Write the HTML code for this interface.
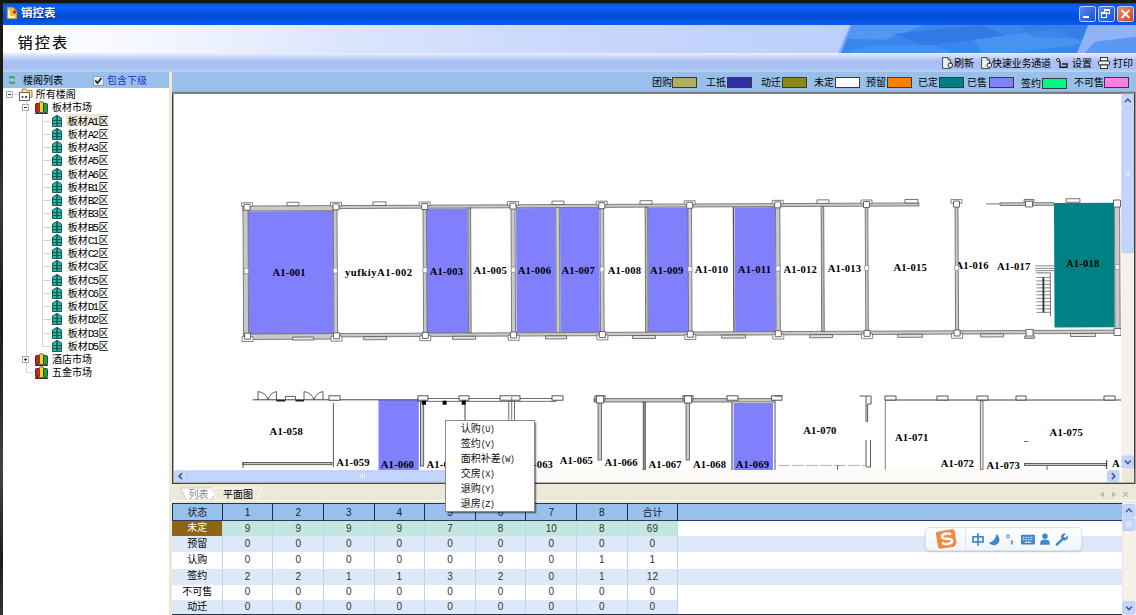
<!DOCTYPE html>
<html lang="zh-CN">
<head>
<meta charset="utf-8">
<title>销控表</title>
<style>
*{box-sizing:border-box;margin:0;padding:0}
html,body{width:1136px;height:615px;overflow:hidden;background:#15170f}
body{position:relative;font-family:"Liberation Sans","Noto Sans CJK SC","WenQuanYi Zen Hei",sans-serif;font-size:10px;color:#000}
div,span,i{position:absolute;white-space:nowrap}
#win{left:3px;top:3px;width:1133px;height:612px;background:#fff;overflow:hidden}
#title{left:0;top:0;width:1133px;height:22px;background:linear-gradient(to bottom,#0a3ab0 0%,#0a5aec 9%,#0a62f6 24%,#0353e2 45%,#004dd8 68%,#0456e8 86%,#0a5cf0 100%)}
#title .cap{left:18px;top:3px;color:#fff;font-weight:bold;font-size:11.5px;line-height:15px;text-shadow:1px 1px 0 #0a2a80}
.tb{top:2.500px;width:16.400px;height:16.200px;border:1px solid #c4d4f6;border-radius:2.500px;background:linear-gradient(135deg,#5a8cf4,#1e4cd0)}
.tb.close{background:linear-gradient(135deg,#f08c68,#d8401a);width:16.500px}
#head{left:0;top:21.500px;width:1133px;height:28.500px;background:linear-gradient(to right,#ffffff 0%,#f6f8ff 12%,#dbe5fd 30%,#c9d8fc 50%,#bccefb 75%,#b2c6fa 100%)}
#head .h{left:14.500px;top:8px;font-size:15px;line-height:20px;color:#101014;letter-spacing:2.200px;text-shadow:.3px 0 0 rgba(16,16,20,.6)}
#toolbar{left:0;top:49.800px;width:1133px;height:19.700px;background:linear-gradient(to bottom,#e9effd 0%,#dbe5fc 10%,#bccdf6 28%,#a9bff2 46%,#a9c1f2 84%,#b5cdf5 92%,#b9d2f6 100%)}
#toolbar span{top:5.200px;font-size:10px;line-height:12px}
#legend{left:0;top:69px;width:1133px;height:20px;background:#99c0eb}
#legend span{top:5px;font-size:10px;line-height:12px}
#legend i{top:5px;width:25px;height:11px;border:1px solid #3a3a3a}
#tree{left:0;top:85px;width:166px;height:527px;background:#fff}
#split{left:166px;top:69px;width:3px;height:543px;background:#ece9d8}
.tn{font-size:10px;line-height:12px}
.tn b{font-weight:normal;font-family:'Liberation Mono',monospace;font-size:11px;letter-spacing:-1.700px;margin-right:1.100px;line-height:10px}
</style>
</head>
<body>
<div style="left:0;top:0;width:3px;height:615px;background:linear-gradient(to bottom,#15170f 0,#1a1f12 90px,#20261a 150px,#3a3d40 200px,#2a2e2a 250px,#191d12 300px,#23281c 380px,#40444a 470px,#2c302c 520px,#1a1e14 560px,#33363a 615px)"></div>
<div id="win">

<div id="title">
<svg style="position:absolute;left:3px;top:3px" width="12" height="14" viewBox="0 0 12 14"><path d="M1 1h6l4 4v8H1z" fill="#e8c048" stroke="#8a6a18" stroke-width=".8"/><path d="M3 4v7h6" fill="none" stroke="#fff" stroke-width="1.4"/><circle cx="8.5" cy="6" r="1.8" fill="#d02818"/></svg>
<div class="cap">销控表</div>
<div class="tb" style="left:1076.200px"><i style="left:3px;top:9px;width:6px;height:2px;background:#fff"></i></div>
<div class="tb" style="left:1095.200px"><i style="left:5px;top:2px;width:6px;height:5px;border:1px solid #fff;border-top-width:2px"></i><i style="left:2px;top:5px;width:6px;height:6px;border:1px solid #fff;border-top-width:2px;background:#3565dc"></i></div>
<div class="tb close" style="left:1114.300px"><svg style="position:absolute;left:2px;top:2px" width="11" height="10" viewBox="0 0 11 10"><path d="M1.5 1l8 8M9.5 1l-8 8" stroke="#fff" stroke-width="1.8"/></svg></div>
</div>

<div id="head"><div class="h">销控表</div>
<svg style="position:absolute;left:830px;top:0" width="303" height="28.500" viewBox="0 0 303 29" preserveAspectRatio="none">
<polygon points="244,29 255,0 303,0 303,29" fill="#8fb3f6"/>
<polygon points="262,17 303,12 303,29 251,29" fill="#5c98f2"/>
<polygon points="8,29 19,0 255,0 244,29" fill="#3b86ee"/>
<polygon points="5,29 17,0 22,0 11,29" fill="#3b86ee" opacity=".45"/>
<polygon points="19,0 92,0 52,15 14,14" fill="#5fa2f4" opacity=".65"/>
<polygon points="60,9 150,0 172,11 92,21" fill="#2c74e4" opacity=".7"/>
<polygon points="140,15 222,4 252,19 172,29 150,29" fill="#5a9df3" opacity=".55"/>
<polygon points="185,0 255,0 250,14 200,12" fill="#2e78e6" opacity=".5"/>
<polygon points="30,22 100,20 120,29 12,29" fill="#4f96f2" opacity=".6"/>

</svg>
</div>

<div id="toolbar">
<svg style="position:absolute;left:939px;top:4.200px" width="13" height="12" viewBox="0 0 13 12"><path d="M.600 .600h5.400l2.500 2.500v8.300h-7.900z" fill="#eef2fb" stroke="#3a3a3a" stroke-width=".9"/><path d="M6 .600v2.500h2.500" fill="none" stroke="#3a3a3a" stroke-width=".8"/><circle cx="8.300" cy="8.200" r="2.300" fill="#eef2fb" stroke="#2a2a2a" stroke-width="1"/><path d="M8.300 5l2 1.300l-2 1z" fill="#2a2a2a"/></svg>
<span style="left:951px">刷新</span>
<svg style="position:absolute;left:978px;top:4.200px" width="13" height="12" viewBox="0 0 13 12"><path d="M.600 .600h5.400l2.500 2.500v8.300h-7.900z" fill="#eef2fb" stroke="#3a3a3a" stroke-width=".9"/><path d="M6 .600v2.500h2.500" fill="none" stroke="#3a3a3a" stroke-width=".8"/><circle cx="8.300" cy="8.200" r="2.300" fill="#eef2fb" stroke="#2a2a2a" stroke-width="1"/><path d="M8.300 5l2 1.300l-2 1z" fill="#2a2a2a"/></svg>
<span style="left:989px;letter-spacing:-.2px">快速业务通道</span>
<svg style="position:absolute;left:1053px;top:5.200px" width="12" height="11" viewBox="0 0 12 11"><path d="M2.500 2.500l1.500 1.500v5.300h7v-3.300h-5" fill="none" stroke="#1c1c1c" stroke-width="1.400"/><circle cx="2" cy="2" r="1.500" fill="#e8eefc" stroke="#1c1c1c" stroke-width=".9"/></svg>
<span style="left:1069px">设置</span>
<svg style="position:absolute;left:1095px;top:4.200px" width="12" height="12" viewBox="0 0 12 12"><rect x="2.5" y=".5" width="7" height="3.500" fill="#fff" stroke="#222" stroke-width=".9"/><rect x=".5" y="4" width="11" height="4" rx="1" fill="#e8eefc" stroke="#222" stroke-width=".9"/><rect x="2.500" y="8" width="7" height="3.500" fill="#fff" stroke="#222" stroke-width=".9"/></svg>
<span style="left:1110px">打印</span>
</div>
<div id="legend">
<svg style="position:absolute;left:4.500px;top:3px" width="8" height="10" viewBox="0 0 8 10"><path d="M6.500 4A2.600 2.600 0 0 0 2 2.500M1.500 6A2.600 2.600 0 0 0 6 7.500" fill="none" stroke="#2aa838" stroke-width="1.500"/><path d="M1 1v2.500h2.500zM7 9V6.500H4.500z" fill="#2aa838"/></svg>
<span style="left:20px;top:2.500px">楼阁列表</span>
<i style="left:90px;top:3.500px;width:11px;height:10px;border:1px solid #8fa2bc;background:#e6e9ee"></i>
<svg style="position:absolute;left:91px;top:5px" width="9" height="8" viewBox="0 0 9 8"><path d="M1.200 3.500l2.300 2.500l4-5" fill="none" stroke="#101828" stroke-width="1.700"/></svg>
<span style="left:104px;top:2.500px;color:#1c33cc">包含下级</span>
<span style="left:649px;top:5px">团购</span><i style="left:669px;top:5px;background:#b0ac62"></i>
<span style="left:703px;top:5px">工抵</span><i style="left:724px;top:5px;background:#3030a8"></i>
<span style="left:758px;top:5px">动迁</span><i style="left:779px;top:5px;background:#8a8a12"></i>
<span style="left:811px;top:5px">未定</span><i style="left:832px;top:5px;background:#ffffff"></i>
<span style="left:863px;top:5px">预留</span><i style="left:884px;top:5px;background:#ff8000"></i>
<span style="left:915px;top:5px">已定</span><i style="left:936px;top:5px;background:#008080"></i>
<span style="left:964px;top:5px">已售</span><i style="left:986px;top:5px;background:#8080f8"></i>
<span style="left:1018px;top:6px">签约</span><i style="left:1039px;top:6px;background:#00f884"></i>
<span style="left:1071px;top:5px">不可售</span><i style="left:1101px;top:5px;background:#ff80e4"></i>
</div>
<div id="tree">
<i style="left:10.5px;top:5.5px;width:5px;height:1px;border-top:1px solid #d4d4d4"></i>
<i style="left:22.5px;top:13.0px;width:1px;height:271.2px;border-left:1px solid #d6d6d6"></i>
<i style="left:38.5px;top:25.2px;width:1px;height:232.5px;border-left:1px solid #d6d6d6"></i>
<svg style="position:absolute;left:3.2px;top:2.5px" width="7" height="7" viewBox="0 0 7 7"><rect x=".5" y=".5" width="6" height="6" fill="#fff" stroke="#aaa" stroke-width="1"/><path d="M2 3.500h3" stroke="#333" stroke-width="1"/></svg>
<svg style="position:absolute;left:15.5px;top:-0.5px" width="14" height="13" viewBox="0 0 14 13"><path d="M3 1h4l1 1.500h5v7h-10z" fill="#f6e08a" stroke="#8a7a30" stroke-width=".8"/><rect x=".5" y="4.500" width="10" height="8" fill="#fff" stroke="#555" stroke-width=".9"/><rect x="2.500" y="8" width="2" height="2" fill="#d03020"/><rect x="6" y="8" width="2" height="2" fill="#2050c0"/></svg>
<span class="tn" style="left:32.8px;top:1.0px">所有楼阁</span>
<svg style="position:absolute;left:19.2px;top:15.8px" width="7" height="7" viewBox="0 0 7 7"><rect x=".5" y=".5" width="6" height="6" fill="#fff" stroke="#aaa" stroke-width="1"/><path d="M2 3.500h3" stroke="#333" stroke-width="1"/></svg>
<svg style="position:absolute;left:31.8px;top:12.8px" width="13" height="13" viewBox="0 0 13 13"><rect x=".5" y="2.500" width="4" height="9" rx="1" fill="#d02020" stroke="#400" stroke-width=".8"/><rect x="4.500" y=".8" width="4" height="10.700" rx="1" fill="#f0d818" stroke="#443" stroke-width=".8"/><rect x="8.500" y="2.500" width="4" height="9" rx="1" fill="#28a048" stroke="#031" stroke-width=".8"/><path d="M0 12.300h13" stroke="#222" stroke-width="1.200"/></svg>
<span class="tn" style="left:49.0px;top:14.2px">板材市场</span>
<i style="left:39.0px;top:32.5px;width:9px;height:1px;border-top:1px solid #d6d6d6"></i>
<svg style="position:absolute;left:49.0px;top:26.5px" width="10" height="12" viewBox="0 0 10 12"><path d="M.500 3l4.300-2.500v11h-4.300zM9.500 3l-4.300-2.500v11h4.300z" fill="#28b8a8" stroke="#0a4a48" stroke-width=".9"/><path d="M.500 5.500h9M.500 8.500h9" stroke="#0a4a48" stroke-width=".8"/></svg>
<i style="left:63.2px;top:26.3px;width:41.500px;height:12px;background:#ece9d8"></i><span class="tn" style="left:64.7px;top:27.5px">板材<b>A1</b>区</span>
<i style="left:39.0px;top:45.8px;width:9px;height:1px;border-top:1px solid #d6d6d6"></i>
<svg style="position:absolute;left:49.0px;top:39.8px" width="10" height="12" viewBox="0 0 10 12"><path d="M.500 3l4.300-2.500v11h-4.300zM9.500 3l-4.300-2.500v11h4.300z" fill="#28b8a8" stroke="#0a4a48" stroke-width=".9"/><path d="M.500 5.500h9M.500 8.500h9" stroke="#0a4a48" stroke-width=".8"/></svg>
<span class="tn" style="left:64.7px;top:40.8px">板材<b>A2</b>区</span>
<i style="left:39.0px;top:59.0px;width:9px;height:1px;border-top:1px solid #d6d6d6"></i>
<svg style="position:absolute;left:49.0px;top:53.0px" width="10" height="12" viewBox="0 0 10 12"><path d="M.500 3l4.300-2.500v11h-4.300zM9.500 3l-4.300-2.500v11h4.300z" fill="#28b8a8" stroke="#0a4a48" stroke-width=".9"/><path d="M.500 5.500h9M.500 8.500h9" stroke="#0a4a48" stroke-width=".8"/></svg>
<span class="tn" style="left:64.7px;top:54.0px">板材<b>A3</b>区</span>
<i style="left:39.0px;top:72.2px;width:9px;height:1px;border-top:1px solid #d6d6d6"></i>
<svg style="position:absolute;left:49.0px;top:66.2px" width="10" height="12" viewBox="0 0 10 12"><path d="M.500 3l4.300-2.500v11h-4.300zM9.500 3l-4.300-2.500v11h4.300z" fill="#28b8a8" stroke="#0a4a48" stroke-width=".9"/><path d="M.500 5.500h9M.500 8.500h9" stroke="#0a4a48" stroke-width=".8"/></svg>
<span class="tn" style="left:64.7px;top:67.2px">板材<b>A5</b>区</span>
<i style="left:39.0px;top:85.5px;width:9px;height:1px;border-top:1px solid #d6d6d6"></i>
<svg style="position:absolute;left:49.0px;top:79.5px" width="10" height="12" viewBox="0 0 10 12"><path d="M.500 3l4.300-2.500v11h-4.300zM9.500 3l-4.300-2.500v11h4.300z" fill="#28b8a8" stroke="#0a4a48" stroke-width=".9"/><path d="M.500 5.500h9M.500 8.500h9" stroke="#0a4a48" stroke-width=".8"/></svg>
<span class="tn" style="left:64.7px;top:80.5px">板材<b>A6</b>区</span>
<i style="left:39.0px;top:98.8px;width:9px;height:1px;border-top:1px solid #d6d6d6"></i>
<svg style="position:absolute;left:49.0px;top:92.8px" width="10" height="12" viewBox="0 0 10 12"><path d="M.500 3l4.300-2.500v11h-4.300zM9.500 3l-4.300-2.500v11h4.300z" fill="#28b8a8" stroke="#0a4a48" stroke-width=".9"/><path d="M.500 5.500h9M.500 8.500h9" stroke="#0a4a48" stroke-width=".8"/></svg>
<span class="tn" style="left:64.7px;top:93.8px">板材<b>B1</b>区</span>
<i style="left:39.0px;top:112.0px;width:9px;height:1px;border-top:1px solid #d6d6d6"></i>
<svg style="position:absolute;left:49.0px;top:106.0px" width="10" height="12" viewBox="0 0 10 12"><path d="M.500 3l4.300-2.500v11h-4.300zM9.500 3l-4.300-2.500v11h4.300z" fill="#28b8a8" stroke="#0a4a48" stroke-width=".9"/><path d="M.500 5.500h9M.500 8.500h9" stroke="#0a4a48" stroke-width=".8"/></svg>
<span class="tn" style="left:64.7px;top:107.0px">板材<b>B2</b>区</span>
<i style="left:39.0px;top:125.2px;width:9px;height:1px;border-top:1px solid #d6d6d6"></i>
<svg style="position:absolute;left:49.0px;top:119.2px" width="10" height="12" viewBox="0 0 10 12"><path d="M.500 3l4.300-2.500v11h-4.300zM9.500 3l-4.300-2.500v11h4.300z" fill="#28b8a8" stroke="#0a4a48" stroke-width=".9"/><path d="M.500 5.500h9M.500 8.500h9" stroke="#0a4a48" stroke-width=".8"/></svg>
<span class="tn" style="left:64.7px;top:120.2px">板材<b>B3</b>区</span>
<i style="left:39.0px;top:138.5px;width:9px;height:1px;border-top:1px solid #d6d6d6"></i>
<svg style="position:absolute;left:49.0px;top:132.5px" width="10" height="12" viewBox="0 0 10 12"><path d="M.500 3l4.300-2.500v11h-4.300zM9.500 3l-4.300-2.500v11h4.300z" fill="#28b8a8" stroke="#0a4a48" stroke-width=".9"/><path d="M.500 5.500h9M.500 8.500h9" stroke="#0a4a48" stroke-width=".8"/></svg>
<span class="tn" style="left:64.7px;top:133.5px">板材<b>B5</b>区</span>
<i style="left:39.0px;top:151.8px;width:9px;height:1px;border-top:1px solid #d6d6d6"></i>
<svg style="position:absolute;left:49.0px;top:145.8px" width="10" height="12" viewBox="0 0 10 12"><path d="M.500 3l4.300-2.500v11h-4.300zM9.500 3l-4.300-2.500v11h4.300z" fill="#28b8a8" stroke="#0a4a48" stroke-width=".9"/><path d="M.500 5.500h9M.500 8.500h9" stroke="#0a4a48" stroke-width=".8"/></svg>
<span class="tn" style="left:64.7px;top:146.8px">板材<b>C1</b>区</span>
<i style="left:39.0px;top:165.0px;width:9px;height:1px;border-top:1px solid #d6d6d6"></i>
<svg style="position:absolute;left:49.0px;top:159.0px" width="10" height="12" viewBox="0 0 10 12"><path d="M.500 3l4.300-2.500v11h-4.300zM9.500 3l-4.300-2.500v11h4.300z" fill="#28b8a8" stroke="#0a4a48" stroke-width=".9"/><path d="M.500 5.500h9M.500 8.500h9" stroke="#0a4a48" stroke-width=".8"/></svg>
<span class="tn" style="left:64.7px;top:160.0px">板材<b>C2</b>区</span>
<i style="left:39.0px;top:178.2px;width:9px;height:1px;border-top:1px solid #d6d6d6"></i>
<svg style="position:absolute;left:49.0px;top:172.2px" width="10" height="12" viewBox="0 0 10 12"><path d="M.500 3l4.300-2.500v11h-4.300zM9.500 3l-4.300-2.500v11h4.300z" fill="#28b8a8" stroke="#0a4a48" stroke-width=".9"/><path d="M.500 5.500h9M.500 8.500h9" stroke="#0a4a48" stroke-width=".8"/></svg>
<span class="tn" style="left:64.7px;top:173.2px">板材<b>C3</b>区</span>
<i style="left:39.0px;top:191.5px;width:9px;height:1px;border-top:1px solid #d6d6d6"></i>
<svg style="position:absolute;left:49.0px;top:185.5px" width="10" height="12" viewBox="0 0 10 12"><path d="M.500 3l4.300-2.500v11h-4.300zM9.500 3l-4.300-2.500v11h4.300z" fill="#28b8a8" stroke="#0a4a48" stroke-width=".9"/><path d="M.500 5.500h9M.500 8.500h9" stroke="#0a4a48" stroke-width=".8"/></svg>
<span class="tn" style="left:64.7px;top:186.5px">板材<b>C5</b>区</span>
<i style="left:39.0px;top:204.8px;width:9px;height:1px;border-top:1px solid #d6d6d6"></i>
<svg style="position:absolute;left:49.0px;top:198.8px" width="10" height="12" viewBox="0 0 10 12"><path d="M.500 3l4.300-2.500v11h-4.300zM9.500 3l-4.300-2.500v11h4.300z" fill="#28b8a8" stroke="#0a4a48" stroke-width=".9"/><path d="M.500 5.500h9M.500 8.500h9" stroke="#0a4a48" stroke-width=".8"/></svg>
<span class="tn" style="left:64.7px;top:199.8px">板材<b>C6</b>区</span>
<i style="left:39.0px;top:218.0px;width:9px;height:1px;border-top:1px solid #d6d6d6"></i>
<svg style="position:absolute;left:49.0px;top:212.0px" width="10" height="12" viewBox="0 0 10 12"><path d="M.500 3l4.300-2.500v11h-4.300zM9.500 3l-4.300-2.500v11h4.300z" fill="#28b8a8" stroke="#0a4a48" stroke-width=".9"/><path d="M.500 5.500h9M.500 8.500h9" stroke="#0a4a48" stroke-width=".8"/></svg>
<span class="tn" style="left:64.7px;top:213.0px">板材<b>D1</b>区</span>
<i style="left:39.0px;top:231.2px;width:9px;height:1px;border-top:1px solid #d6d6d6"></i>
<svg style="position:absolute;left:49.0px;top:225.2px" width="10" height="12" viewBox="0 0 10 12"><path d="M.500 3l4.300-2.500v11h-4.300zM9.500 3l-4.300-2.500v11h4.300z" fill="#28b8a8" stroke="#0a4a48" stroke-width=".9"/><path d="M.500 5.500h9M.500 8.500h9" stroke="#0a4a48" stroke-width=".8"/></svg>
<span class="tn" style="left:64.7px;top:226.2px">板材<b>D2</b>区</span>
<i style="left:39.0px;top:244.5px;width:9px;height:1px;border-top:1px solid #d6d6d6"></i>
<svg style="position:absolute;left:49.0px;top:238.5px" width="10" height="12" viewBox="0 0 10 12"><path d="M.500 3l4.300-2.500v11h-4.300zM9.500 3l-4.300-2.500v11h4.300z" fill="#28b8a8" stroke="#0a4a48" stroke-width=".9"/><path d="M.500 5.500h9M.500 8.500h9" stroke="#0a4a48" stroke-width=".8"/></svg>
<span class="tn" style="left:64.7px;top:239.5px">板材<b>D3</b>区</span>
<i style="left:39.0px;top:257.8px;width:9px;height:1px;border-top:1px solid #d6d6d6"></i>
<svg style="position:absolute;left:49.0px;top:251.8px" width="10" height="12" viewBox="0 0 10 12"><path d="M.500 3l4.300-2.500v11h-4.300zM9.500 3l-4.300-2.500v11h4.300z" fill="#28b8a8" stroke="#0a4a48" stroke-width=".9"/><path d="M.500 5.500h9M.500 8.500h9" stroke="#0a4a48" stroke-width=".8"/></svg>
<span class="tn" style="left:64.7px;top:252.8px">板材<b>D5</b>区</span>
<i style="left:23.0px;top:284.2px;width:8px;height:1px;border-top:1px solid #d6d6d6"></i>
<svg style="position:absolute;left:19.2px;top:267.5px" width="7" height="7" viewBox="0 0 7 7"><rect x=".5" y=".5" width="6" height="6" fill="#fff" stroke="#aaa" stroke-width="1"/><path d="M2 3.500h3M3.500 2v3" stroke="#333" stroke-width="1"/></svg>
<svg style="position:absolute;left:31.8px;top:264.5px" width="13" height="13" viewBox="0 0 13 13"><rect x=".5" y="2.500" width="4" height="9" rx="1" fill="#d02020" stroke="#400" stroke-width=".8"/><rect x="4.500" y=".8" width="4" height="10.700" rx="1" fill="#f0d818" stroke="#443" stroke-width=".8"/><rect x="8.500" y="2.500" width="4" height="9" rx="1" fill="#28a048" stroke="#031" stroke-width=".8"/><path d="M0 12.300h13" stroke="#222" stroke-width="1.200"/></svg>
<span class="tn" style="left:49.0px;top:266.0px">酒店市场</span>
<svg style="position:absolute;left:31.8px;top:277.8px" width="13" height="13" viewBox="0 0 13 13"><rect x=".5" y="2.500" width="4" height="9" rx="1" fill="#d02020" stroke="#400" stroke-width=".8"/><rect x="4.500" y=".8" width="4" height="10.700" rx="1" fill="#f0d818" stroke="#443" stroke-width=".8"/><rect x="8.500" y="2.500" width="4" height="9" rx="1" fill="#28a048" stroke="#031" stroke-width=".8"/><path d="M0 12.300h13" stroke="#222" stroke-width="1.200"/></svg>
<span class="tn" style="left:49.0px;top:279.2px">五金市场</span>
</div><div id="split"></div>
<svg style="position:absolute;left:169px;top:85px" width="967" height="403" viewBox="172 88 967 403" font-family="'Liberation Serif',serif" font-weight="bold" font-size="10.6">
<rect x="172" y="92" width="964" height="392" fill="#ece9d8"/>
<rect x="172.700" y="92.800" width="962" height="390.400" fill="#fff" stroke="#3c3c3c" stroke-width="1.500"/>
<path d="M172 92.800h963.500" stroke="#7c7c7c" stroke-width="2"/>
<rect x="1121.500" y="470" width="12.700" height="12.400" fill="#ece9d8"/>
<clipPath id="cp"><rect x="173.500" y="93.800" width="947.500" height="376.200"/></clipPath>
<g clip-path="url(#cp)">
<text x="955.400" y="268.700" textLength="33.200" lengthAdjust="spacing">A1-016</text>
<g transform="rotate(-0.26 244 208)">
<rect x="248.0" y="211.5" width="85.0" height="123.0" fill="#8080fc"/>
<rect x="426.4" y="209.5" width="41.1" height="124.5" fill="#8080fc"/>
<rect x="516.0" y="209.5" width="39.3" height="124.5" fill="#8080fc"/>
<rect x="560.0" y="209.5" width="39.3" height="124.5" fill="#8080fc"/>
<rect x="648.0" y="209.5" width="40.0" height="124.5" fill="#8080fc"/>
<rect x="734.6" y="209.5" width="40.6" height="124.5" fill="#8080fc"/>
<rect x="1054.0" y="206.6" width="60.0" height="124.6" fill="#008284"/>
<rect x="243.0" y="206.0" width="94.0" height="5.0" fill="#c9c9c9" stroke="#646464" stroke-width="0.80"/>
<rect x="243.0" y="334.0" width="94.0" height="5.5" fill="#c9c9c9" stroke="#646464" stroke-width="0.80"/>
<rect x="243.0" y="206.0" width="5.0" height="133.5" fill="#c9c9c9" stroke="#646464" stroke-width="0.80"/>
<rect x="337.0" y="206.0" width="582.0" height="3.0" fill="#c9c9c9" stroke="#646464" stroke-width="0.80"/>
<path d="M986.0 207.3L1001.0 207.3" stroke="#666" stroke-width="0.90" fill="none"/>
<rect x="1000.0" y="206.3" width="54.0" height="2.7" fill="#c9c9c9" stroke="#646464" stroke-width="0.80"/>
<rect x="337.0" y="334.0" width="782.0" height="3.3" fill="#c9c9c9" stroke="#646464" stroke-width="0.80"/>
<rect x="333.3" y="209.0" width="3.7" height="125.0" fill="#c9c9c9" stroke="#646464" stroke-width="0.80"/>
<rect x="423.0" y="209.0" width="3.4" height="125.0" fill="#c9c9c9" stroke="#646464" stroke-width="0.80"/>
<rect x="511.0" y="209.0" width="4.0" height="125.0" fill="#c9c9c9" stroke="#646464" stroke-width="0.80"/>
<rect x="555.7" y="209.0" width="3.7" height="125.0" fill="#c9c9c9" stroke="#646464" stroke-width="0.80"/>
<rect x="600.0" y="209.0" width="3.6" height="125.0" fill="#c9c9c9" stroke="#646464" stroke-width="0.80"/>
<rect x="688.0" y="209.0" width="3.5" height="125.0" fill="#c9c9c9" stroke="#646464" stroke-width="0.80"/>
<rect x="775.5" y="209.0" width="4.3" height="125.0" fill="#c9c9c9" stroke="#646464" stroke-width="0.80"/>
<rect x="865.2" y="209.0" width="2.6" height="125.0" fill="#c9c9c9" stroke="#646464" stroke-width="0.80"/>
<rect x="955.0" y="209.0" width="3.0" height="125.0" fill="#c9c9c9" stroke="#646464" stroke-width="0.80"/>
<rect x="1114.4" y="209.0" width="5.2" height="125.0" fill="#c9c9c9" stroke="#646464" stroke-width="0.80"/>
<rect x="468.0" y="209.0" width="2.6" height="125.0" fill="#bbb" stroke="#5e5e5e" stroke-width="0.80"/>
<rect x="645.1" y="209.0" width="2.6" height="125.0" fill="#bbb" stroke="#5e5e5e" stroke-width="0.80"/>
<rect x="821.1" y="209.0" width="2.6" height="125.0" fill="#bbb" stroke="#5e5e5e" stroke-width="0.80"/>
<path d="M733.4 209.0L733.4 334.0" stroke="#555" stroke-width="1.40" fill="none"/>
<rect x="241.5" y="202.8" width="11.0" height="3.7" fill="#fff" stroke="#666" stroke-width="0.80"/>
<rect x="241.5" y="336.5" width="11.0" height="5.0" fill="#fff" stroke="#666" stroke-width="0.80"/>
<rect x="244.0" y="204.3" width="6.0" height="6.0" fill="#fff" stroke="#555" stroke-width=".9"/>
<rect x="244.0" y="333.2" width="6.0" height="6.0" fill="#fff" stroke="#555" stroke-width=".9"/>
<rect x="330.5" y="202.8" width="11.0" height="3.7" fill="#fff" stroke="#666" stroke-width="0.80"/>
<rect x="330.5" y="336.5" width="11.0" height="5.0" fill="#fff" stroke="#666" stroke-width="0.80"/>
<rect x="333.0" y="204.3" width="6.0" height="6.0" fill="#fff" stroke="#555" stroke-width=".9"/>
<rect x="333.0" y="333.2" width="6.0" height="6.0" fill="#fff" stroke="#555" stroke-width=".9"/>
<rect x="419.2" y="202.8" width="11.0" height="3.7" fill="#fff" stroke="#666" stroke-width="0.80"/>
<rect x="419.2" y="336.5" width="11.0" height="5.0" fill="#fff" stroke="#666" stroke-width="0.80"/>
<rect x="421.7" y="204.3" width="6.0" height="6.0" fill="#fff" stroke="#555" stroke-width=".9"/>
<rect x="421.7" y="333.2" width="6.0" height="6.0" fill="#fff" stroke="#555" stroke-width=".9"/>
<rect x="507.5" y="202.8" width="11.0" height="3.7" fill="#fff" stroke="#666" stroke-width="0.80"/>
<rect x="507.5" y="336.5" width="11.0" height="5.0" fill="#fff" stroke="#666" stroke-width="0.80"/>
<rect x="510.0" y="204.3" width="6.0" height="6.0" fill="#fff" stroke="#555" stroke-width=".9"/>
<rect x="510.0" y="333.2" width="6.0" height="6.0" fill="#fff" stroke="#555" stroke-width=".9"/>
<rect x="596.3" y="202.8" width="11.0" height="3.7" fill="#fff" stroke="#666" stroke-width="0.80"/>
<rect x="596.3" y="336.5" width="11.0" height="5.0" fill="#fff" stroke="#666" stroke-width="0.80"/>
<rect x="598.8" y="204.3" width="6.0" height="6.0" fill="#fff" stroke="#555" stroke-width=".9"/>
<rect x="598.8" y="333.2" width="6.0" height="6.0" fill="#fff" stroke="#555" stroke-width=".9"/>
<rect x="684.2" y="202.8" width="11.0" height="3.7" fill="#fff" stroke="#666" stroke-width="0.80"/>
<rect x="684.2" y="336.5" width="11.0" height="5.0" fill="#fff" stroke="#666" stroke-width="0.80"/>
<rect x="686.7" y="204.3" width="6.0" height="6.0" fill="#fff" stroke="#555" stroke-width=".9"/>
<rect x="686.7" y="333.2" width="6.0" height="6.0" fill="#fff" stroke="#555" stroke-width=".9"/>
<rect x="772.2" y="202.8" width="11.0" height="3.7" fill="#fff" stroke="#666" stroke-width="0.80"/>
<rect x="772.2" y="336.5" width="11.0" height="5.0" fill="#fff" stroke="#666" stroke-width="0.80"/>
<rect x="774.7" y="204.3" width="6.0" height="6.0" fill="#fff" stroke="#555" stroke-width=".9"/>
<rect x="774.7" y="333.2" width="6.0" height="6.0" fill="#fff" stroke="#555" stroke-width=".9"/>
<rect x="861.0" y="202.8" width="11.0" height="3.7" fill="#fff" stroke="#666" stroke-width="0.80"/>
<rect x="861.0" y="336.5" width="11.0" height="5.0" fill="#fff" stroke="#666" stroke-width="0.80"/>
<rect x="863.5" y="204.3" width="6.0" height="6.0" fill="#fff" stroke="#555" stroke-width=".9"/>
<rect x="863.5" y="333.2" width="6.0" height="6.0" fill="#fff" stroke="#555" stroke-width=".9"/>
<rect x="951.0" y="202.8" width="11.0" height="3.7" fill="#fff" stroke="#666" stroke-width="0.80"/>
<rect x="951.0" y="336.5" width="11.0" height="5.0" fill="#fff" stroke="#666" stroke-width="0.80"/>
<rect x="953.5" y="204.3" width="6.0" height="6.0" fill="#fff" stroke="#555" stroke-width=".9"/>
<rect x="953.5" y="333.2" width="6.0" height="6.0" fill="#fff" stroke="#555" stroke-width=".9"/>
<rect x="1113.5" y="204.0" width="7.0" height="7.0" fill="#fff" stroke="#555" stroke-width=".9"/>
<rect x="1113.5" y="332.5" width="7.0" height="7.0" fill="#fff" stroke="#555" stroke-width=".9"/>
<rect x="1025.5" y="203.5" width="7.0" height="7.0" fill="#fff" stroke="#555" stroke-width=".9"/>
<rect x="1025.5" y="333.0" width="7.0" height="7.0" fill="#fff" stroke="#555" stroke-width=".9"/>
<rect x="1024.0" y="203.0" width="10.0" height="2.0" fill="#c9c9c9" stroke="#666" stroke-width="0.80"/>
<rect x="1024.0" y="339.5" width="10.0" height="2.5" fill="#c9c9c9" stroke="#666" stroke-width="0.80"/>
<rect x="244.0" y="268.5" width="4" height="5" fill="#fff" stroke="#8a8a8a" stroke-width=".7"/>
<rect x="333.0" y="268.5" width="4" height="5" fill="#fff" stroke="#8a8a8a" stroke-width=".7"/>
<rect x="422.7" y="268.5" width="4" height="5" fill="#fff" stroke="#8a8a8a" stroke-width=".7"/>
<rect x="511.0" y="268.5" width="4" height="5" fill="#fff" stroke="#8a8a8a" stroke-width=".7"/>
<rect x="599.8" y="268.5" width="4" height="5" fill="#fff" stroke="#8a8a8a" stroke-width=".7"/>
<rect x="687.7" y="268.5" width="4" height="5" fill="#fff" stroke="#8a8a8a" stroke-width=".7"/>
<rect x="775.7" y="268.5" width="4" height="5" fill="#fff" stroke="#8a8a8a" stroke-width=".7"/>
<rect x="864.5" y="268.5" width="4" height="5" fill="#fff" stroke="#8a8a8a" stroke-width=".7"/>
<rect x="954.5" y="268.5" width="4" height="5" fill="#fff" stroke="#8a8a8a" stroke-width=".7"/>
<rect x="1115.0" y="268.5" width="4" height="5" fill="#fff" stroke="#8a8a8a" stroke-width=".7"/>
<rect x="287.0" y="202.5" width="12.0" height="3.5" fill="#fff" stroke="#555" stroke-width="0.80"/>
<rect x="373.0" y="202.5" width="13.0" height="3.5" fill="#fff" stroke="#555" stroke-width="0.80"/>
<rect x="552.0" y="202.5" width="12.0" height="3.5" fill="#fff" stroke="#555" stroke-width="0.80"/>
<rect x="640.0" y="202.5" width="12.0" height="3.5" fill="#fff" stroke="#555" stroke-width="0.80"/>
<rect x="817.0" y="202.5" width="12.0" height="3.5" fill="#fff" stroke="#555" stroke-width="0.80"/>
<rect x="905.0" y="202.5" width="13.0" height="3.5" fill="#fff" stroke="#555" stroke-width="0.80"/>
<rect x="1066.0" y="202.5" width="14.0" height="3.5" fill="#fff" stroke="#555" stroke-width="0.80"/>
<rect x="292.0" y="337.3" width="21.0" height="3.0" fill="#e4e4e4" stroke="#555" stroke-width="0.80"/>
<rect x="363.0" y="337.3" width="23.0" height="3.0" fill="#e4e4e4" stroke="#555" stroke-width="0.80"/>
<rect x="452.0" y="337.3" width="23.0" height="3.0" fill="#e4e4e4" stroke="#555" stroke-width="0.80"/>
<rect x="545.0" y="337.3" width="21.0" height="3.0" fill="#e4e4e4" stroke="#555" stroke-width="0.80"/>
<rect x="632.0" y="337.3" width="23.0" height="3.0" fill="#e4e4e4" stroke="#555" stroke-width="0.80"/>
<rect x="721.0" y="337.3" width="24.0" height="3.0" fill="#e4e4e4" stroke="#555" stroke-width="0.80"/>
<rect x="809.0" y="337.3" width="23.0" height="3.0" fill="#e4e4e4" stroke="#555" stroke-width="0.80"/>
<rect x="897.0" y="337.3" width="25.0" height="3.0" fill="#e4e4e4" stroke="#555" stroke-width="0.80"/>
<rect x="980.0" y="337.3" width="23.0" height="3.0" fill="#e4e4e4" stroke="#555" stroke-width="0.80"/>
<rect x="1070.0" y="337.3" width="25.0" height="3.0" fill="#e4e4e4" stroke="#555" stroke-width="0.80"/>
<path d="M1036.0 281.0L1050.0 281.0" stroke="#555" stroke-width="0.70" fill="none"/>
<path d="M1036.0 284.5L1050.0 284.5" stroke="#555" stroke-width="0.70" fill="none"/>
<path d="M1036.0 288.0L1050.0 288.0" stroke="#555" stroke-width="0.70" fill="none"/>
<path d="M1036.0 291.5L1050.0 291.5" stroke="#555" stroke-width="0.70" fill="none"/>
<path d="M1036.0 295.0L1050.0 295.0" stroke="#555" stroke-width="0.70" fill="none"/>
<path d="M1036.0 298.5L1050.0 298.5" stroke="#555" stroke-width="0.70" fill="none"/>
<path d="M1036.0 302.0L1050.0 302.0" stroke="#555" stroke-width="0.70" fill="none"/>
<path d="M1036.0 305.5L1050.0 305.5" stroke="#555" stroke-width="0.70" fill="none"/>
<path d="M1036.0 309.0L1050.0 309.0" stroke="#555" stroke-width="0.70" fill="none"/>
<path d="M1036.0 312.5L1050.0 312.5" stroke="#555" stroke-width="0.70" fill="none"/>
<path d="M1036.0 316.0L1050.0 316.0" stroke="#555" stroke-width="0.70" fill="none"/>
<path d="M1036.0 276.5L1050.0 276.5" stroke="#555" stroke-width="0.80" fill="none"/>
<path d="M1050.0 276.5L1050.0 320.0" stroke="#555" stroke-width="0.80" fill="none"/>
<path d="M1043.0 281.0L1043.0 316.0" stroke="#333" stroke-width="1.80" fill="none"/>
<path d="M1035.0 269.5L1054.0 269.5" stroke="#555" stroke-width="0.70" fill="none"/>
<path d="M1035.0 272.0L1054.0 272.0" stroke="#555" stroke-width="0.70" fill="none"/>
<path d="M1035.0 274.3L1054.0 274.3" stroke="#555" stroke-width="0.70" fill="none"/>
</g>
<rect x="378.5" y="400.0" width="40.3" height="70.0" fill="#8080fc"/>
<rect x="733.6" y="403.0" width="39.4" height="67.0" fill="#8080fc"/>
<path d="M252.7 399.8L420.0 399.8" stroke="#444" stroke-width="1.00" fill="none"/>
<rect x="418.0" y="398.6" width="138.0" height="2.7" fill="#fff" stroke="#4a4a4a" stroke-width="0.80"/>
<rect x="594.0" y="398.7" width="181.0" height="3.3" fill="#c9c9c9" stroke="#555" stroke-width="0.80"/>
<path d="M885.0 400.0L1121.0 400.0" stroke="#444" stroke-width="1.20" fill="none"/>
<path d="M258 400v-8.400q8 1 10 8.400q2-7.400 8.400-8.400v8.400M304 400v-8.400q8 1 10 8.400q2-7.400 9-8.400v8.400M285.400 400v-3.600h10.100v3.600" fill="none" stroke="#4a4a4a" stroke-width=".9"/>
<path d="M276.4 400.7L285.4 400.7" stroke="#222" stroke-width="1.60" fill="none"/>
<path d="M295.5 400.7L304.0 400.7" stroke="#222" stroke-width="1.60" fill="none"/>
<rect x="329.0" y="395.8" width="11.0" height="4.4" fill="#fff" stroke="#444" stroke-width="0.90"/>
<rect x="418.0" y="395.8" width="10.0" height="4.4" fill="#fff" stroke="#444" stroke-width="0.90"/>
<rect x="459.0" y="395.8" width="10.0" height="4.4" fill="#fff" stroke="#444" stroke-width="0.90"/>
<rect x="500.0" y="395.8" width="20.0" height="4.4" fill="#fff" stroke="#444" stroke-width="0.90"/>
<rect x="552.0" y="395.8" width="11.0" height="4.4" fill="#fff" stroke="#444" stroke-width="0.90"/>
<rect x="595.0" y="395.8" width="10.0" height="4.4" fill="#fff" stroke="#444" stroke-width="0.90"/>
<rect x="683.0" y="395.8" width="10.0" height="4.4" fill="#fff" stroke="#444" stroke-width="0.90"/>
<rect x="727.0" y="395.8" width="11.0" height="4.4" fill="#fff" stroke="#444" stroke-width="0.90"/>
<rect x="771.6" y="395.8" width="10.4" height="4.4" fill="#fff" stroke="#444" stroke-width="0.90"/>
<rect x="885.0" y="396.0" width="11.0" height="4.0" fill="#fff" stroke="#444" stroke-width="0.90"/>
<rect x="937.0" y="396.0" width="11.0" height="4.0" fill="#fff" stroke="#444" stroke-width="0.90"/>
<rect x="977.0" y="396.0" width="11.0" height="4.0" fill="#fff" stroke="#444" stroke-width="0.90"/>
<rect x="1016.0" y="396.0" width="10.0" height="4.0" fill="#fff" stroke="#444" stroke-width="0.90"/>
<rect x="1104.0" y="396.0" width="11.0" height="4.0" fill="#fff" stroke="#444" stroke-width="0.90"/>
<path d="M333.4 403.0L333.4 467.0" stroke="#5a5a5a" stroke-width="1.00" fill="none"/>
<rect x="420.4" y="402.0" width="3.3" height="64.0" fill="#c9c9c9" stroke="#444" stroke-width="0.80"/>
<path d="M465.0 400.0L465.0 470.0" stroke="#444" stroke-width="1.00" fill="none"/>
<rect x="508.8" y="401.3" width="5.8" height="68.7" fill="#fff" stroke="#4a4a4a" stroke-width="0.80"/>
<path d="M511.7 397.0L511.7 470.0" stroke="#555" stroke-width="0.80" fill="none"/>
<rect x="598.0" y="403.0" width="3.5" height="57.0" fill="#c9c9c9" stroke="#555" stroke-width="0.80"/>
<rect x="643.2" y="402.0" width="2.1" height="68.0" fill="#999" stroke="#444" stroke-width="0.80"/>
<rect x="686.0" y="403.0" width="3.5" height="57.0" fill="#c9c9c9" stroke="#555" stroke-width="0.80"/>
<path d="M732.0 402.0L732.0 470.0" stroke="#555" stroke-width="1.20" fill="none"/>
<path d="M775.0 402.0L775.0 470.0" stroke="#555" stroke-width="1.00" fill="none"/>
<rect x="596.5" y="396.0" width="7.0" height="7.0" fill="#fff" stroke="#555" stroke-width=".9"/>
<rect x="684.5" y="396.0" width="7.0" height="7.0" fill="#fff" stroke="#555" stroke-width=".9"/>
<rect x="243.0" y="462.5" width="89.0" height="2.2" fill="#c9c9c9" stroke="#444" stroke-width="0.80"/>
<path d="M243.0 462.0L243.0 468.0" stroke="#444" stroke-width="0.90" fill="none"/>
<path d="M775 396h7M859.600 396h11.500v8h-3.500v18M866 396v26M866 440v27M870.500 440v27h-4" fill="none" stroke="#444" stroke-width=".9"/>
<path d="M778 465.400h87" stroke="#9a9a9a" stroke-width=".8" stroke-dasharray="12 2"/>
<path d="M837.6 465.0L837.6 470.0" stroke="#555" stroke-width="0.90" fill="none"/>
<path d="M885.3 400.0L885.3 470.0" stroke="#808080" stroke-width="1.00" fill="none"/>
<rect x="980.3" y="401.0" width="2.7" height="69.0" fill="#e6e6e6" stroke="#555" stroke-width="0.80"/>
<rect x="1024.5" y="463.4" width="82.2" height="2.0" fill="#c9c9c9" stroke="#444" stroke-width="0.80"/>
<path d="M1047.0 465.0L1047.0 470.0" stroke="#555" stroke-width="0.90" fill="none"/>
<path d="M1106.7 460.0L1106.7 469.0" stroke="#333" stroke-width="1.00" fill="none"/>
<path d="M1024.0 441.5L1028.0 441.5" stroke="#555" stroke-width="0.90" fill="none"/>
<rect x="422.0" y="400.7" width="4.0" height="4.0" fill="#000"/>
<rect x="442.6" y="400.7" width="4.0" height="4.0" fill="#000"/>
<rect x="461.7" y="400.7" width="4.0" height="4.0" fill="#000"/>
<text x="272.4" y="276.1" textLength="33.2" lengthAdjust="spacing">A1-001</text>
<text x="345.0" y="276.1" textLength="67.1" lengthAdjust="spacing">yufkiyA1-002</text>
<text x="429.8" y="274.6" textLength="33.2" lengthAdjust="spacing">A1-003</text>
<text x="473.5" y="274.0" textLength="33.2" lengthAdjust="spacing">A1-005</text>
<text x="517.8" y="273.8" textLength="33.2" lengthAdjust="spacing">A1-006</text>
<text x="561.5" y="273.7" textLength="33.2" lengthAdjust="spacing">A1-007</text>
<text x="607.8" y="273.7" textLength="33.2" lengthAdjust="spacing">A1-008</text>
<text x="650.0" y="273.7" textLength="33.2" lengthAdjust="spacing">A1-009</text>
<text x="694.8" y="272.7" textLength="33.2" lengthAdjust="spacing">A1-010</text>
<text x="737.8" y="272.7" textLength="33.2" lengthAdjust="spacing">A1-011</text>
<text x="783.5" y="273.4" textLength="33.2" lengthAdjust="spacing">A1-012</text>
<text x="827.8" y="272.4" textLength="33.2" lengthAdjust="spacing">A1-013</text>
<text x="893.5" y="270.7" textLength="33.2" lengthAdjust="spacing">A1-015</text>
<text x="997.0" y="270.4" textLength="33.2" lengthAdjust="spacing">A1-017</text>
<text x="1066.0" y="267.4" textLength="33.2" lengthAdjust="spacing">A1-018</text>
<text x="269.6" y="435.4" textLength="33.2" lengthAdjust="spacing">A1-058</text>
<text x="336.3" y="466.4" textLength="33.2" lengthAdjust="spacing">A1-059</text>
<text x="380.7" y="467.7" textLength="33.2" lengthAdjust="spacing">A1-060</text>
<text x="426.5" y="467.9" textLength="33.2" lengthAdjust="spacing">A1-061</text>
<text x="519.7" y="467.7" textLength="33.2" lengthAdjust="spacing">A1-063</text>
<text x="559.7" y="464.4" textLength="33.2" lengthAdjust="spacing">A1-065</text>
<text x="604.4" y="466.4" textLength="33.2" lengthAdjust="spacing">A1-066</text>
<text x="648.4" y="468.1" textLength="33.2" lengthAdjust="spacing">A1-067</text>
<text x="692.9" y="468.1" textLength="33.2" lengthAdjust="spacing">A1-068</text>
<text x="735.8" y="468.1" textLength="33.2" lengthAdjust="spacing">A1-069</text>
<text x="803.2" y="434.4" textLength="33.2" lengthAdjust="spacing">A1-070</text>
<text x="895.0" y="441.4" textLength="33.2" lengthAdjust="spacing">A1-071</text>
<text x="940.7" y="467.2" textLength="33.2" lengthAdjust="spacing">A1-072</text>
<text x="986.5" y="468.8" textLength="33.2" lengthAdjust="spacing">A1-073</text>
<text x="1049.6" y="435.6" textLength="33.2" lengthAdjust="spacing">A1-075</text>
<text x="1112.0" y="466.9" textLength="33.2" lengthAdjust="spacing">A1-076</text>
</g>
<rect x="1121.500" y="93.800" width="12.500" height="376.200" fill="#f3f1e8"/>
<rect x="1122" y="107.800" width="11.500" height="144.800" rx="1.500" fill="#c3d5fd" stroke="#b0c4f4" stroke-width=".8"/>
<path d="M1125.500 171.500h4.500M1125.500 173.500h4.500M1125.500 175.500h4.500" stroke="#eef4fe" stroke-width=".9"/>
<rect x="1122.0" y="94.5" width="11.5" height="12.3" rx="1.500" fill="#c5d6fd" stroke="#b3c6f6" stroke-width=".8"/>
<path d="M1124.8 102.2L1127.8 99.2L1130.8 102.2" fill="none" stroke="#4d6185" stroke-width="1.700"/>
<rect x="1122.0" y="456.0" width="11.5" height="12.0" rx="1.500" fill="#c5d6fd" stroke="#b3c6f6" stroke-width=".8"/>
<path d="M1124.8 460.5L1127.8 463.5L1130.8 460.5" fill="none" stroke="#4d6185" stroke-width="1.700"/>
<rect x="174" y="470" width="947.500" height="12.300" fill="#fbfaf6"/>
<rect x="187" y="470.800" width="346" height="10.700" rx="1.500" fill="#c3d5fd" stroke="#b0c4f4" stroke-width=".8"/>
<path d="M360.500 474v4.500M362.500 474v4.500M364.500 474v4.500" stroke="#eef4fe" stroke-width=".9"/>
<rect x="174.5" y="470.8" width="12.0" height="10.7" rx="1.500" fill="#c5d6fd" stroke="#b3c6f6" stroke-width=".8"/>
<path d="M182.0 473.2L179.0 476.2L182.0 479.2" fill="none" stroke="#4d6185" stroke-width="1.700"/>
<rect x="1107.5" y="470.8" width="11.5" height="10.7" rx="1.500" fill="#c5d6fd" stroke="#b3c6f6" stroke-width=".8"/>
<path d="M1111.8 473.2L1114.8 476.2L1111.8 479.2" fill="none" stroke="#4d6185" stroke-width="1.700"/>
</svg>
<div style="left:169px;top:481px;width:964px;height:19.500px;background:#ece9d8"></div>
<svg style="position:absolute;left:169px;top:481px" width="964" height="20" viewBox="172 484 964 20"><path d="M180.500 488l6 12h24l5-6l-4-6z" fill="#fff" stroke="#c9c5b2" stroke-width=".9"/><path d="M211.500 488h50.500l-6.500 12.500h-38.500l-2.500-5.500l2.500-2z" fill="#ece9d8" stroke="#fbfaf4" stroke-width="1"/><path d="M172 500.500h44M256 500.500h880" stroke="#fbfaf4" stroke-width="1"/><path d="M1104 491.500v6l-4-3zM1112 491.500v6l4-3z" fill="#bdbaa8"/><path d="M1123 492l5 5M1128 492l-5 5" stroke="#bdbaa8" stroke-width="1.200"/></svg>
<span style="left:185.500px;top:485.500px;font-size:10px;line-height:12px;color:#8c8c8c">列表</span>
<span style="left:220px;top:485.500px;font-size:10px;line-height:12px;color:#000">平面图</span>
<div style="left:169px;top:500px;width:964px;height:112px;background:#fff;overflow:hidden;font-size:10px;line-height:12px">
<i style="left:0;top:0;width:951px;height:18.500px;background:#99c0eb;border-top:1.200px solid #22324f;border-bottom:1.200px solid #22324f"></i>
<i style="left:0;top:17.7px;width:950px;height:15.5px;background:#fff"></i>
<i style="left:0;top:17.7px;width:505.7px;height:15.5px;background:#c3e6e1"></i>
<i style="left:0;top:33.2px;width:950px;height:15.8px;background:#dde8f8"></i>
<i style="left:0;top:33.2px;width:505.7px;height:15.8px;background:#dde8f8"></i>
<i style="left:0;top:49.0px;width:950px;height:16.5px;background:#fff"></i>
<i style="left:0;top:49.0px;width:505.7px;height:16.5px;background:#fff"></i>
<i style="left:0;top:65.5px;width:950px;height:16.0px;background:#dde8f8"></i>
<i style="left:0;top:65.5px;width:505.7px;height:16.0px;background:#dde8f8"></i>
<i style="left:0;top:81.5px;width:950px;height:15.8px;background:#fff"></i>
<i style="left:0;top:81.5px;width:505.7px;height:15.8px;background:#fff"></i>
<i style="left:0;top:97.3px;width:950px;height:14.0px;background:#fff"></i>
<i style="left:0;top:97.3px;width:505.7px;height:14.0px;background:#dde8f8"></i>
<i style="left:0;top:17.7px;width:50.3px;height:15.5px;background:#8c6610"></i>
<i style="left:-0.6px;top:0;width:1.200px;height:18px;background:#1d2f4e"></i>
<i style="left:49.7px;top:0;width:1.200px;height:18px;background:#1d2f4e"></i>
<i style="left:49.8px;top:18px;width:1px;height:94px;background:#c4d4e8"></i>
<i style="left:100.3px;top:0;width:1.200px;height:18px;background:#1d2f4e"></i>
<i style="left:100.4px;top:18px;width:1px;height:94px;background:#c4d4e8"></i>
<i style="left:150.9px;top:0;width:1.200px;height:18px;background:#1d2f4e"></i>
<i style="left:151.0px;top:18px;width:1px;height:94px;background:#c4d4e8"></i>
<i style="left:201.5px;top:0;width:1.200px;height:18px;background:#1d2f4e"></i>
<i style="left:201.6px;top:18px;width:1px;height:94px;background:#c4d4e8"></i>
<i style="left:252.1px;top:0;width:1.200px;height:18px;background:#1d2f4e"></i>
<i style="left:252.2px;top:18px;width:1px;height:94px;background:#c4d4e8"></i>
<i style="left:302.7px;top:0;width:1.200px;height:18px;background:#1d2f4e"></i>
<i style="left:302.8px;top:18px;width:1px;height:94px;background:#c4d4e8"></i>
<i style="left:353.3px;top:0;width:1.200px;height:18px;background:#1d2f4e"></i>
<i style="left:353.4px;top:18px;width:1px;height:94px;background:#c4d4e8"></i>
<i style="left:403.9px;top:0;width:1.200px;height:18px;background:#1d2f4e"></i>
<i style="left:404.0px;top:18px;width:1px;height:94px;background:#c4d4e8"></i>
<i style="left:454.5px;top:0;width:1.200px;height:18px;background:#1d2f4e"></i>
<i style="left:454.6px;top:18px;width:1px;height:94px;background:#c4d4e8"></i>
<i style="left:505.1px;top:0;width:1.200px;height:18px;background:#1d2f4e"></i>
<i style="left:505.2px;top:18px;width:1px;height:94px;background:#c4d4e8"></i>
<i style="left:0;top:0;width:1.300px;height:18px;background:#1d2f4e"></i>
<i style="left:0;top:111px;width:951px;height:1.200px;background:#26334d"></i>
<i style="left:0;top:17.400px;width:951px;height:1.100px;background:#2a3a58"></i>
<span style="left:25.2px;top:3.500px;width:40px;margin-left:-20px;text-align:center;color:#1a1a2a">状态</span>
<span style="left:75.6px;top:3.500px;width:40px;margin-left:-20px;text-align:center;color:#1a1a2a;font-size:10px">1</span>
<span style="left:126.2px;top:3.500px;width:40px;margin-left:-20px;text-align:center;color:#1a1a2a;font-size:10px">2</span>
<span style="left:176.8px;top:3.500px;width:40px;margin-left:-20px;text-align:center;color:#1a1a2a;font-size:10px">3</span>
<span style="left:227.4px;top:3.500px;width:40px;margin-left:-20px;text-align:center;color:#1a1a2a;font-size:10px">4</span>
<span style="left:278.0px;top:3.500px;width:40px;margin-left:-20px;text-align:center;color:#1a1a2a;font-size:10px">5</span>
<span style="left:328.6px;top:3.500px;width:40px;margin-left:-20px;text-align:center;color:#1a1a2a;font-size:10px">6</span>
<span style="left:379.2px;top:3.500px;width:40px;margin-left:-20px;text-align:center;color:#1a1a2a;font-size:10px">7</span>
<span style="left:429.8px;top:3.500px;width:40px;margin-left:-20px;text-align:center;color:#1a1a2a;font-size:10px">8</span>
<span style="left:480.4px;top:3.500px;width:40px;margin-left:-20px;text-align:center;color:#1a1a2a">合计</span>
<span style="left:25.2px;top:19.2px;width:44px;margin-left:-22px;text-align:center;color:#fff">未定</span>
<span style="left:75.6px;top:19.5px;width:30px;margin-left:-15px;text-align:center;color:#333;font-size:10px">9</span>
<span style="left:126.2px;top:19.5px;width:30px;margin-left:-15px;text-align:center;color:#333;font-size:10px">9</span>
<span style="left:176.8px;top:19.5px;width:30px;margin-left:-15px;text-align:center;color:#333;font-size:10px">9</span>
<span style="left:227.4px;top:19.5px;width:30px;margin-left:-15px;text-align:center;color:#333;font-size:10px">9</span>
<span style="left:278.0px;top:19.5px;width:30px;margin-left:-15px;text-align:center;color:#333;font-size:10px">7</span>
<span style="left:328.6px;top:19.5px;width:30px;margin-left:-15px;text-align:center;color:#333;font-size:10px">8</span>
<span style="left:379.2px;top:19.5px;width:30px;margin-left:-15px;text-align:center;color:#333;font-size:10px">10</span>
<span style="left:429.8px;top:19.5px;width:30px;margin-left:-15px;text-align:center;color:#333;font-size:10px">8</span>
<span style="left:480.4px;top:19.5px;width:30px;margin-left:-15px;text-align:center;color:#333;font-size:10px">69</span>
<span style="left:25.2px;top:34.8px;width:44px;margin-left:-22px;text-align:center;color:#000">预留</span>
<span style="left:75.6px;top:35.1px;width:30px;margin-left:-15px;text-align:center;color:#333;font-size:10px">0</span>
<span style="left:126.2px;top:35.1px;width:30px;margin-left:-15px;text-align:center;color:#333;font-size:10px">0</span>
<span style="left:176.8px;top:35.1px;width:30px;margin-left:-15px;text-align:center;color:#333;font-size:10px">0</span>
<span style="left:227.4px;top:35.1px;width:30px;margin-left:-15px;text-align:center;color:#333;font-size:10px">0</span>
<span style="left:278.0px;top:35.1px;width:30px;margin-left:-15px;text-align:center;color:#333;font-size:10px">0</span>
<span style="left:328.6px;top:35.1px;width:30px;margin-left:-15px;text-align:center;color:#333;font-size:10px">0</span>
<span style="left:379.2px;top:35.1px;width:30px;margin-left:-15px;text-align:center;color:#333;font-size:10px">0</span>
<span style="left:429.8px;top:35.1px;width:30px;margin-left:-15px;text-align:center;color:#333;font-size:10px">0</span>
<span style="left:480.4px;top:35.1px;width:30px;margin-left:-15px;text-align:center;color:#333;font-size:10px">0</span>
<span style="left:25.2px;top:51.0px;width:44px;margin-left:-22px;text-align:center;color:#000">认购</span>
<span style="left:75.6px;top:51.2px;width:30px;margin-left:-15px;text-align:center;color:#333;font-size:10px">0</span>
<span style="left:126.2px;top:51.2px;width:30px;margin-left:-15px;text-align:center;color:#333;font-size:10px">0</span>
<span style="left:176.8px;top:51.2px;width:30px;margin-left:-15px;text-align:center;color:#333;font-size:10px">0</span>
<span style="left:227.4px;top:51.2px;width:30px;margin-left:-15px;text-align:center;color:#333;font-size:10px">0</span>
<span style="left:278.0px;top:51.2px;width:30px;margin-left:-15px;text-align:center;color:#333;font-size:10px">0</span>
<span style="left:328.6px;top:51.2px;width:30px;margin-left:-15px;text-align:center;color:#333;font-size:10px">0</span>
<span style="left:379.2px;top:51.2px;width:30px;margin-left:-15px;text-align:center;color:#333;font-size:10px">0</span>
<span style="left:429.8px;top:51.2px;width:30px;margin-left:-15px;text-align:center;color:#333;font-size:10px">1</span>
<span style="left:480.4px;top:51.2px;width:30px;margin-left:-15px;text-align:center;color:#333;font-size:10px">1</span>
<span style="left:25.2px;top:67.2px;width:44px;margin-left:-22px;text-align:center;color:#000">签约</span>
<span style="left:75.6px;top:67.5px;width:30px;margin-left:-15px;text-align:center;color:#333;font-size:10px">2</span>
<span style="left:126.2px;top:67.5px;width:30px;margin-left:-15px;text-align:center;color:#333;font-size:10px">2</span>
<span style="left:176.8px;top:67.5px;width:30px;margin-left:-15px;text-align:center;color:#333;font-size:10px">1</span>
<span style="left:227.4px;top:67.5px;width:30px;margin-left:-15px;text-align:center;color:#333;font-size:10px">1</span>
<span style="left:278.0px;top:67.5px;width:30px;margin-left:-15px;text-align:center;color:#333;font-size:10px">3</span>
<span style="left:328.6px;top:67.5px;width:30px;margin-left:-15px;text-align:center;color:#333;font-size:10px">2</span>
<span style="left:379.2px;top:67.5px;width:30px;margin-left:-15px;text-align:center;color:#333;font-size:10px">0</span>
<span style="left:429.8px;top:67.5px;width:30px;margin-left:-15px;text-align:center;color:#333;font-size:10px">1</span>
<span style="left:480.4px;top:67.5px;width:30px;margin-left:-15px;text-align:center;color:#333;font-size:10px">12</span>
<span style="left:25.2px;top:83.1px;width:44px;margin-left:-22px;text-align:center;color:#000">不可售</span>
<span style="left:75.6px;top:83.4px;width:30px;margin-left:-15px;text-align:center;color:#333;font-size:10px">0</span>
<span style="left:126.2px;top:83.4px;width:30px;margin-left:-15px;text-align:center;color:#333;font-size:10px">0</span>
<span style="left:176.8px;top:83.4px;width:30px;margin-left:-15px;text-align:center;color:#333;font-size:10px">0</span>
<span style="left:227.4px;top:83.4px;width:30px;margin-left:-15px;text-align:center;color:#333;font-size:10px">0</span>
<span style="left:278.0px;top:83.4px;width:30px;margin-left:-15px;text-align:center;color:#333;font-size:10px">0</span>
<span style="left:328.6px;top:83.4px;width:30px;margin-left:-15px;text-align:center;color:#333;font-size:10px">0</span>
<span style="left:379.2px;top:83.4px;width:30px;margin-left:-15px;text-align:center;color:#333;font-size:10px">0</span>
<span style="left:429.8px;top:83.4px;width:30px;margin-left:-15px;text-align:center;color:#333;font-size:10px">0</span>
<span style="left:480.4px;top:83.4px;width:30px;margin-left:-15px;text-align:center;color:#333;font-size:10px">0</span>
<span style="left:25.2px;top:98.0px;width:44px;margin-left:-22px;text-align:center;color:#000">动迁</span>
<span style="left:75.6px;top:98.3px;width:30px;margin-left:-15px;text-align:center;color:#333;font-size:10px">0</span>
<span style="left:126.2px;top:98.3px;width:30px;margin-left:-15px;text-align:center;color:#333;font-size:10px">0</span>
<span style="left:176.8px;top:98.3px;width:30px;margin-left:-15px;text-align:center;color:#333;font-size:10px">0</span>
<span style="left:227.4px;top:98.3px;width:30px;margin-left:-15px;text-align:center;color:#333;font-size:10px">0</span>
<span style="left:278.0px;top:98.3px;width:30px;margin-left:-15px;text-align:center;color:#333;font-size:10px">0</span>
<span style="left:328.6px;top:98.3px;width:30px;margin-left:-15px;text-align:center;color:#333;font-size:10px">0</span>
<span style="left:379.2px;top:98.3px;width:30px;margin-left:-15px;text-align:center;color:#333;font-size:10px">0</span>
<span style="left:429.8px;top:98.3px;width:30px;margin-left:-15px;text-align:center;color:#333;font-size:10px">0</span>
<span style="left:480.4px;top:98.3px;width:30px;margin-left:-15px;text-align:center;color:#333;font-size:10px">0</span>
<i style="left:950px;top:0;width:14px;height:112px;background:#f3f1e8;border-left:1px solid #e8e6da"></i>
<svg style="position:absolute;left:950px;top:0" width="14" height="112" viewBox="0 0 14 112"><rect x="1" y="1.500" width="12" height="12.500" rx="1.500" fill="#c5d6fd" stroke="#b3c6f6" stroke-width=".8"/><path d="M4 9l3-3l3 3" fill="none" stroke="#4d6185" stroke-width="1.700"/><rect x="1" y="15.500" width="12" height="12" rx="1.500" fill="#c3d5fd" stroke="#b0c4f4" stroke-width=".8"/><path d="M4.500 19.500h5M4.500 21.500h5M4.500 23.500h5" stroke="#eef4fe" stroke-width=".9"/><rect x="1" y="98.500" width="12" height="12.500" rx="1.500" fill="#c5d6fd" stroke="#b3c6f6" stroke-width=".8"/><path d="M4 103.500l3 3l3-3" fill="none" stroke="#4d6185" stroke-width="1.700"/></svg>
</div>
<div style="left:442.300px;top:416.800px;width:89.500px;height:92.500px;background:#fff;border:1px solid #8a8a86;box-shadow:1.500px 1.500px 1.500px rgba(0,0,0,.45)"></div>
<span style="left:457.700px;top:419.7px;font-size:10px;line-height:12px;color:#111">认购<b style="font-weight:normal;font-size:8.500px;font-family:'Liberation Mono',monospace;letter-spacing:-.6px">(U)</b></span>
<span style="left:457.700px;top:434.7px;font-size:10px;line-height:12px;color:#111">签约<b style="font-weight:normal;font-size:8.500px;font-family:'Liberation Mono',monospace;letter-spacing:-.6px">(V)</b></span>
<span style="left:457.700px;top:449.7px;font-size:10px;line-height:12px;color:#111">面积补差<b style="font-weight:normal;font-size:8.500px;font-family:'Liberation Mono',monospace;letter-spacing:-.6px">(W)</b></span>
<span style="left:457.700px;top:464.7px;font-size:10px;line-height:12px;color:#111">交房<b style="font-weight:normal;font-size:8.500px;font-family:'Liberation Mono',monospace;letter-spacing:-.6px">(X)</b></span>
<span style="left:457.700px;top:479.7px;font-size:10px;line-height:12px;color:#111">退购<b style="font-weight:normal;font-size:8.500px;font-family:'Liberation Mono',monospace;letter-spacing:-.6px">(Y)</b></span>
<span style="left:457.700px;top:494.7px;font-size:10px;line-height:12px;color:#111">退房<b style="font-weight:normal;font-size:8.500px;font-family:'Liberation Mono',monospace;letter-spacing:-.6px">(Z)</b></span>
<div style="left:921.500px;top:524px;width:157.500px;height:23.500px;background:linear-gradient(to bottom,#fdfeff,#f1f5fb);border:1px solid #dde3ec;border-radius:5px;box-shadow:0 1px 2px rgba(90,110,150,.28)"></div>
<svg style="position:absolute;left:920px;top:523px" width="162" height="27" viewBox="923 526 162 27"><path d="M965.500 528.500v20" stroke="#dfe5ee" stroke-width="1"/><g transform="rotate(-9 946 539)"><path d="M938.500 529h15.500q3 0 3 3v13.500l-3.500 3.500h-15q-3 0-3-3v-14q0-3 3-3z" fill="#fff" opacity=".9"/><path d="M939.300 530.300h14q2.500 0 2.500 2.500v12l-3 3h-13.500q-2.500 0-2.500-2.500v-12.500q0-2.500 2.500-2.500z" fill="#f08a42"/><path d="M951.800 535.300c-2.800-2.500-9.300-2-9.300 1.200c0 3.300 9.300 1.600 9.300 5c0 3.200-7.200 3.500-10.300.8" fill="none" stroke="#fff" stroke-width="2.600"/></g><g fill="none" stroke="#3f86cc" stroke-width="1.700"><rect x="973" y="536.800" width="10" height="5.200"/><path d="M978 533.300v12.500"/></g><path d="M996 534.300a5.700 5.700 0 1 1-7 8.300a8 8 0 0 0 7-8.300z" fill="#3f86cc"/><circle cx="1008" cy="536.300" r="1.500" fill="none" stroke="#3f86cc" stroke-width="1"/><path d="M1012 541.800q.8 1.500-.8 2.800" stroke="#3f86cc" stroke-width="1.300" fill="none"/><circle cx="1011.800" cy="541.500" r="1" fill="#3f86cc"/><rect x="1021" y="534.800" width="14" height="9.700" rx="1" fill="#3f86cc"/><path d="M1022.800 537.300h10.500M1022.800 539.600h10.500" stroke="#fff" stroke-width="1" stroke-dasharray="1.500 1"/><path d="M1024.800 542.200h6.500" stroke="#fff" stroke-width="1"/><circle cx="1045" cy="536.300" r="2.700" fill="#3f86cc"/><path d="M1040.300 544.800v-2q0-3.300 4.700-3.300q4.700 0 4.700 3.300v2z" fill="#3f86cc"/><path d="M1056 543.800l5.300-5.300a3.600 3.600 0 0 1 4.700-4.700l-2.500 2.500l1.700 1.700l2.500-2.500a3.600 3.600 0 0 1-4.700 4.700l-5.300 5.300a1.200 1.200 0 0 1-1.700-1.700z" fill="#3f86cc"/></svg>
</div>
</body>
</html>
